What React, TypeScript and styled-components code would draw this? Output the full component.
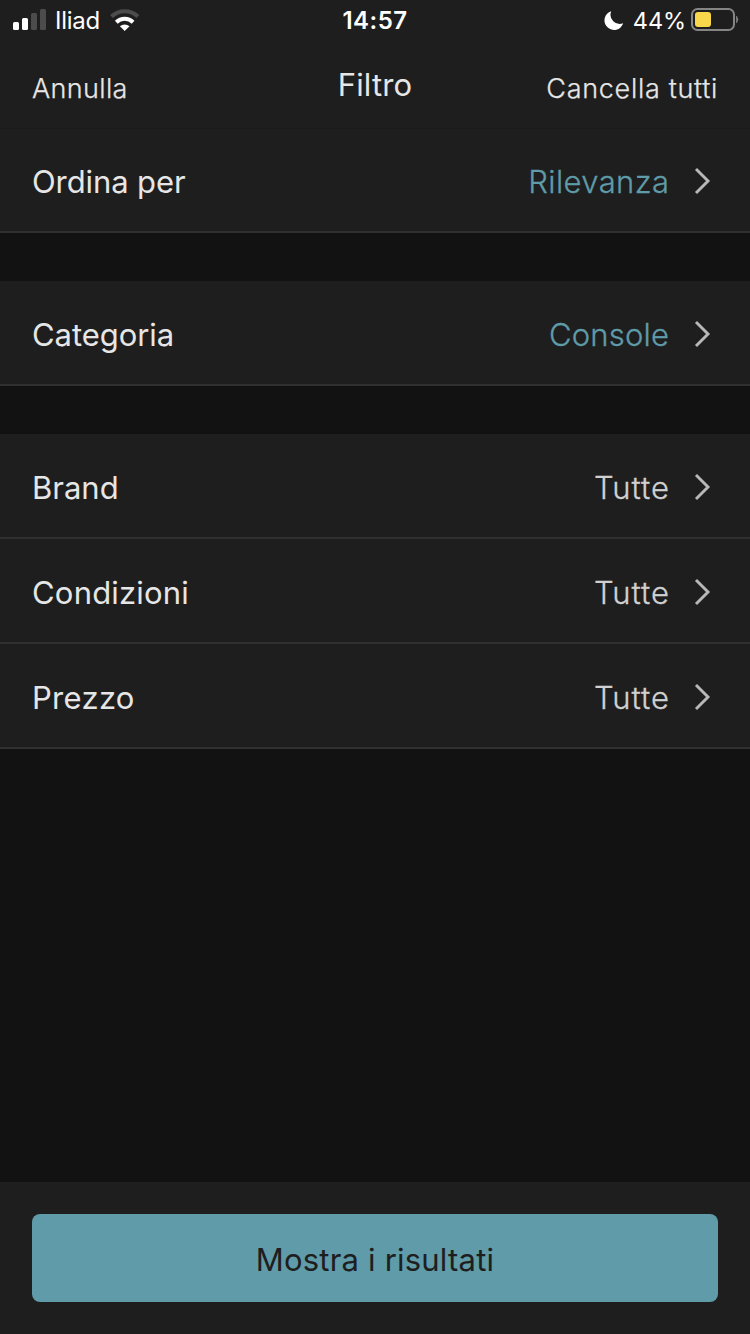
import React from "react";
import styled, { createGlobalStyle } from "styled-components";

const GlobalStyle = createGlobalStyle`
  * { box-sizing: border-box; }
  body {
    margin: 0;
    background: #121212;
    font-family: Inter, "Liberation Sans", sans-serif;
  }
  button {
    font: inherit;
    border: 0;
    padding: 0;
    background: none;
    color: inherit;
  }
`;

const Screen = styled.main`
  display: flex;
  flex-direction: column;
  width: 750px;
  height: 1334px;
  background: #121212;
`;

const StatusBar = styled.div`
  display: grid;
  grid-template-columns: 1fr auto 1fr;
  height: 40px;
  background: #1e1e1e;
  color: #fff;
  font-size: 24px;
  line-height: 40px;
`;

const StatusLeft = styled.div`
  display: flex;
  padding-left: 13px;
`;

const Carrier = styled.span`
  margin: 1px 10px 0 8px;
  letter-spacing: -0.25px;
`;

const Clock = styled.span`
  padding-top: 1px;
  font-weight: 600;
  letter-spacing: 0.5px;
`;

const StatusRight = styled.div`
  display: flex;
  justify-content: flex-end;
  padding-right: 11px;
`;

const Percent = styled.span`
  margin: 1px 5px 0 9px;
  font-size: 23.5px;
  letter-spacing: -0.1px;
`;

const Header = styled.header`
  position: relative;
  display: grid;
  grid-template-columns: 1fr auto 1fr;
  height: 88px;
  padding: 0 32px;
  background: #1e1e1e;
  box-shadow: 0 1px 0 #1b1b1b;
  color: #e6e6e6;
`;

const HeaderAction = styled.button<{ $end?: boolean; $tracking: number }>`
  justify-self: ${(p) => (p.$end ? "end" : "start")};
  align-self: start;
  padding-top: 32px;
  font-size: 27px;
  font-weight: 350;
  line-height: 33px;
  letter-spacing: ${(p) => p.$tracking}px;
  -webkit-text-stroke: 0.25px currentColor;
`;

const Title = styled.h1`
  margin: 0;
  padding-top: 26px;
  font-size: 31px;
  font-weight: 400;
  line-height: 38px;
  letter-spacing: 0.15px;
`;

const Group = styled.section`
  margin-bottom: 48px;
`;

const Row = styled.div`
  display: flex;
  align-items: center;
  height: 105px;
  padding: 4px 40px 0 32px;
  border-bottom: 2px solid #303030;
  background: #1e1e1e;
  font-size: 31px;
  line-height: 38px;
`;

const Label = styled.span<{ $tracking: number }>`
  flex: 1;
  color: #e6e6e6;
  letter-spacing: ${(p) => p.$tracking}px;
`;

const Value = styled.span<{ $active?: boolean; $tracking: number }>`
  margin-right: ${(p) => -p.$tracking}px;
  color: ${(p) => (p.$active ? "#5f9ba8" : "#d0d0d0")};
  font-weight: 300;
  letter-spacing: ${(p) => p.$tracking}px;
  -webkit-text-stroke: 0.3px currentColor;
`;

const Chevron = styled.svg`
  margin: -2px -0.5px 0 24.5px;
`;

const Footer = styled.footer`
  height: 152px;
  margin-top: auto;
  padding: 32px;
  background: #1e1e1e;
`;

const SubmitButton = styled.button`
  width: 100%;
  height: 88px;
  padding-top: 2px;
  border-radius: 8px;
  background: #5f9ba8;
  color: #1e1e1e;
  font-size: 31px;
  letter-spacing: 0.2px;
`;

type Item = { label: string; value: string; active?: boolean; lt: number; vt: number };

const groups: Item[][] = [
  [{ label: "Ordina per", value: "Rilevanza", active: true, lt: -0.1, vt: 0.4 }],
  [{ label: "Categoria", value: "Console", active: true, lt: -0.05, vt: 0.2 }],
  [
    { label: "Brand", value: "Tutte", lt: 0, vt: 0.95 },
    { label: "Condizioni", value: "Tutte", lt: 0.2, vt: 0.95 },
    { label: "Prezzo", value: "Tutte", lt: 0.3, vt: 0.95 },
  ],
];

const SignalIcon = () => (
  <svg width="34" height="40" viewBox="0 0 34 40">
    <rect x="0" y="22" width="6" height="8" rx="1.5" fill="#fff" />
    <rect x="9" y="18" width="6" height="12" rx="1.5" fill="#fff" />
    <rect x="18" y="13" width="6" height="17" rx="1.5" fill="#4c4c4c" />
    <rect x="27" y="9" width="6" height="21" rx="1.5" fill="#4c4c4c" />
  </svg>
);

const WifiIcon = () => (
  <svg width="30" height="40" viewBox="0 0 30 40">
    <path d="M1.5 16.5a19.2 19.2 0 0 1 26.4 0" fill="none" stroke="#4c4c4c" strokeWidth="4" />
    <path d="M6.3 22.2a12.2 12.2 0 0 1 16.8 0" fill="none" stroke="#fff" strokeWidth="4" />
    <path d="M9.9 26.3a7.2 7.2 0 0 1 9.6 0L14.7 31z" fill="#fff" />
  </svg>
);

const MoonIcon = () => (
  <svg width="20" height="40" viewBox="0 0 20 40">
    <path d="M7.2 11.2A9.6 9.6 0 1 0 19.2 23.3 9.3 9.3 0 0 1 7.2 11.2z" fill="#fff" />
  </svg>
);

const BatteryIcon = () => (
  <svg width="48" height="40" viewBox="0 0 48 40">
    <rect x="1" y="9" width="42" height="21" rx="5.5" fill="none" stroke="#858585" strokeWidth="2" />
    <rect x="4" y="12" width="16" height="15" rx="3" fill="#f8d74a" />
    <path d="M45.5 16q2.8 3.5 0 7z" fill="#858585" stroke="#858585" strokeWidth="0.6" />
  </svg>
);

const ChevronIcon = () => (
  <Chevron width="17" height="28" viewBox="0 0 17 28">
    <path d="M2 2L14 14L2 26" fill="none" stroke="#b8b8b8" strokeWidth="2.9" />
  </Chevron>
);

export default function App() {
  return (
    <Screen>
      <GlobalStyle />
      <StatusBar>
        <StatusLeft>
          <SignalIcon />
          <Carrier>Iliad</Carrier>
          <WifiIcon />
        </StatusLeft>
        <Clock>14:57</Clock>
        <StatusRight>
          <MoonIcon />
          <Percent>44%</Percent>
          <BatteryIcon />
        </StatusRight>
      </StatusBar>
      <Header>
        <HeaderAction $tracking={0.35}>Annulla</HeaderAction>
        <Title>Filtro</Title>
        <HeaderAction $end $tracking={0.7}>Cancella tutti</HeaderAction>
      </Header>
      {groups.map((items) => (
        <Group key={items[0].label}>
          {items.map((item) => (
            <Row key={item.label}>
              <Label $tracking={item.lt}>{item.label}</Label>
              <Value $active={item.active} $tracking={item.vt}>{item.value}</Value>
              <ChevronIcon />
            </Row>
          ))}
        </Group>
      ))}
      <Footer>
        <SubmitButton>Mostra i risultati</SubmitButton>
      </Footer>
    </Screen>
  );
}
